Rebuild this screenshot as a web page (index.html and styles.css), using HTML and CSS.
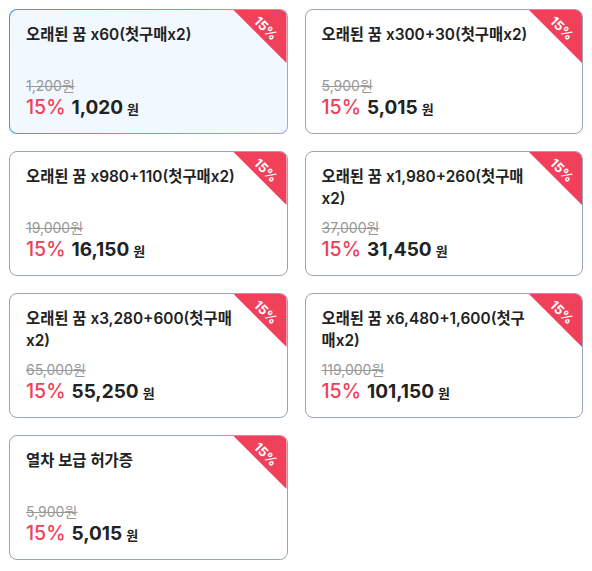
FILE: index.html
```html
<!DOCTYPE html>
<html lang="ko">
<head>
<meta charset="utf-8">
<link rel="stylesheet" href="styles.css">
</head>
<body>
<div class="grid">
  <div class="card selected">
    <div class="ribbon"></div><span class="ribbon-text">15%</span>
    <div class="title">오래된 꿈 x60(첫구매x2)</div>
    <div class="prices">
      <div class="orig">1,200원</div>
      <div class="now"><span class="pct">15%</span><span class="amt">1,020</span><span class="won">원</span></div>
    </div>
  </div>
  <div class="card">
    <div class="ribbon"></div><span class="ribbon-text">15%</span>
    <div class="title">오래된 꿈 x300+30(첫구매x2)</div>
    <div class="prices">
      <div class="orig">5,900원</div>
      <div class="now"><span class="pct">15%</span><span class="amt">5,015</span><span class="won">원</span></div>
    </div>
  </div>
  <div class="card">
    <div class="ribbon"></div><span class="ribbon-text">15%</span>
    <div class="title">오래된 꿈 x980+110(첫구매x2)</div>
    <div class="prices">
      <div class="orig">19,000원</div>
      <div class="now"><span class="pct">15%</span><span class="amt">16,150</span><span class="won">원</span></div>
    </div>
  </div>
  <div class="card">
    <div class="ribbon"></div><span class="ribbon-text">15%</span>
    <div class="title">오래된 꿈 x1,980+260(첫구매x2)</div>
    <div class="prices">
      <div class="orig">37,000원</div>
      <div class="now"><span class="pct">15%</span><span class="amt">31,450</span><span class="won">원</span></div>
    </div>
  </div>
  <div class="card">
    <div class="ribbon"></div><span class="ribbon-text">15%</span>
    <div class="title">오래된 꿈 x3,280+600(첫구매x2)</div>
    <div class="prices">
      <div class="orig">65,000원</div>
      <div class="now"><span class="pct">15%</span><span class="amt">55,250</span><span class="won">원</span></div>
    </div>
  </div>
  <div class="card">
    <div class="ribbon"></div><span class="ribbon-text">15%</span>
    <div class="title">오래된 꿈 x6,480+1,600(첫구매x2)</div>
    <div class="prices">
      <div class="orig">119,000원</div>
      <div class="now"><span class="pct">15%</span><span class="amt">101,150</span><span class="won">원</span></div>
    </div>
  </div>
  <div class="card">
    <div class="ribbon"></div><span class="ribbon-text">15%</span>
    <div class="title">열차 보급 허가증</div>
    <div class="prices">
      <div class="orig">5,900원</div>
      <div class="now"><span class="pct">15%</span><span class="amt">5,015</span><span class="won">원</span></div>
    </div>
  </div>
</div>
</body>
</html>
```

FILE: styles.css
```css
html, body {
  margin: 0;
  padding: 0;
  background: #ffffff;
}
body {
  padding: 9px;
  font-family: Inter, "Noto Sans CJK KR", sans-serif;
  color: #222;
}
.grid {
  display: grid;
  grid-template-columns: 1fr 1fr;
  column-gap: 17px;
  row-gap: 17px;
}
.card {
  position: relative;
  overflow: hidden;
  box-sizing: border-box;
  height: 125px;
  border: 1px solid #97a3ba;
  border-radius: 8px;
  background: #fff;
  padding: 14px 47px 12px 16px;
  display: flex;
  flex-direction: column;
  justify-content: space-between;
}
.card.selected {
  border: 1px solid transparent;
  background:
    linear-gradient(#f2f8ff, #f2f8ff) padding-box,
    linear-gradient(100deg, #3399f3, #a89cfb) border-box;
}
.title {
  font-size: 15.4px;
  font-weight: 600;
  line-height: 22px;
  color: #222;
}
.orig {
  font-size: 14px;
  line-height: 17px;
  color: #999;
  text-decoration: line-through;
}
.now {
  display: flex;
  align-items: baseline;
  line-height: 24px;
  margin-top: 1px;
}
.pct {
  color: #f03f58;
  font-size: 19.5px;
  font-weight: 500;
  margin-right: 6px;
}
.amt {
  font-size: 19px;
  font-weight: 700;
  color: #222;
  margin-right: 4px;
}
.won {
  font-size: 13px;
  font-weight: 700;
  color: #222;
}
.ribbon {
  position: absolute;
  top: 0;
  right: 0;
  width: 53px;
  height: 53px;
  background: #f0405a;
  clip-path: polygon(0 0, 100% 0, 100% 100%);
}
.ribbon-text {
  position: absolute;
  top: 18px;
  right: 20px;
  transform: translate(50%, -50%) rotate(45deg);
  color: #fff;
  font-size: 13px;
  font-weight: 700;
  line-height: 12px;
  white-space: nowrap;
}
```
